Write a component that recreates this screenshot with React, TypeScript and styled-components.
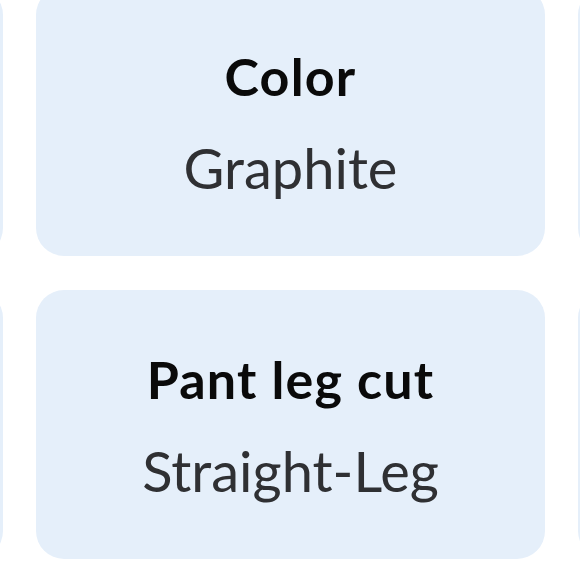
import styled, { createGlobalStyle } from 'styled-components';

const GlobalStyle = createGlobalStyle`
  html, body {
    margin: 0;
    padding: 0;
    background: #ffffff;
    overflow: hidden;
  }
  body {
    font-family: Lato, 'Noto Sans', sans-serif;
  }
`;

type Spec = { label: string; value: string } | null;

// neighbouring cards only peek in at the edges, their text is out of view
const specs: Spec[] = [
  null,
  { label: 'Color', value: 'Graphite' },
  null,
  null,
  { label: 'Pant leg cut', value: 'Straight-Leg' },
  null,
];

const App = () => {
  return (
    <>
      <GlobalStyle />
      <Grid>
        {specs.map((spec, i) => (
          <Card key={i}>
            {spec && (
              <>
                <Label>{spec.label}</Label>
                <Value>{spec.value}</Value>
              </>
            )}
          </Card>
        ))}
      </Grid>
    </>
  );
};

const Grid = styled.section`
  display: grid;
  grid-template-columns: repeat(3, 509px);
  column-gap: 33px;
  row-gap: 34px;
  margin-left: -506px;
  margin-top: -13px;
`;

const Card = styled.div`
  display: flex;
  flex-direction: column;
  align-items: center;
  height: 269px;
  box-sizing: border-box;
  padding-top: 58px;
  background: #e5effa;
  border-radius: 28px;
`;

const Label = styled.h3`
  margin: 0;
  font-size: 52px;
  line-height: 62px;
  font-weight: 700;
  letter-spacing: 1.2px;
  color: #0a0a0a;
`;

const Value = styled.p`
  margin: 29px 0 0;
  font-size: 56px;
  line-height: 64px;
  font-weight: 400;
  color: #2f3033;
`;

export default App;
